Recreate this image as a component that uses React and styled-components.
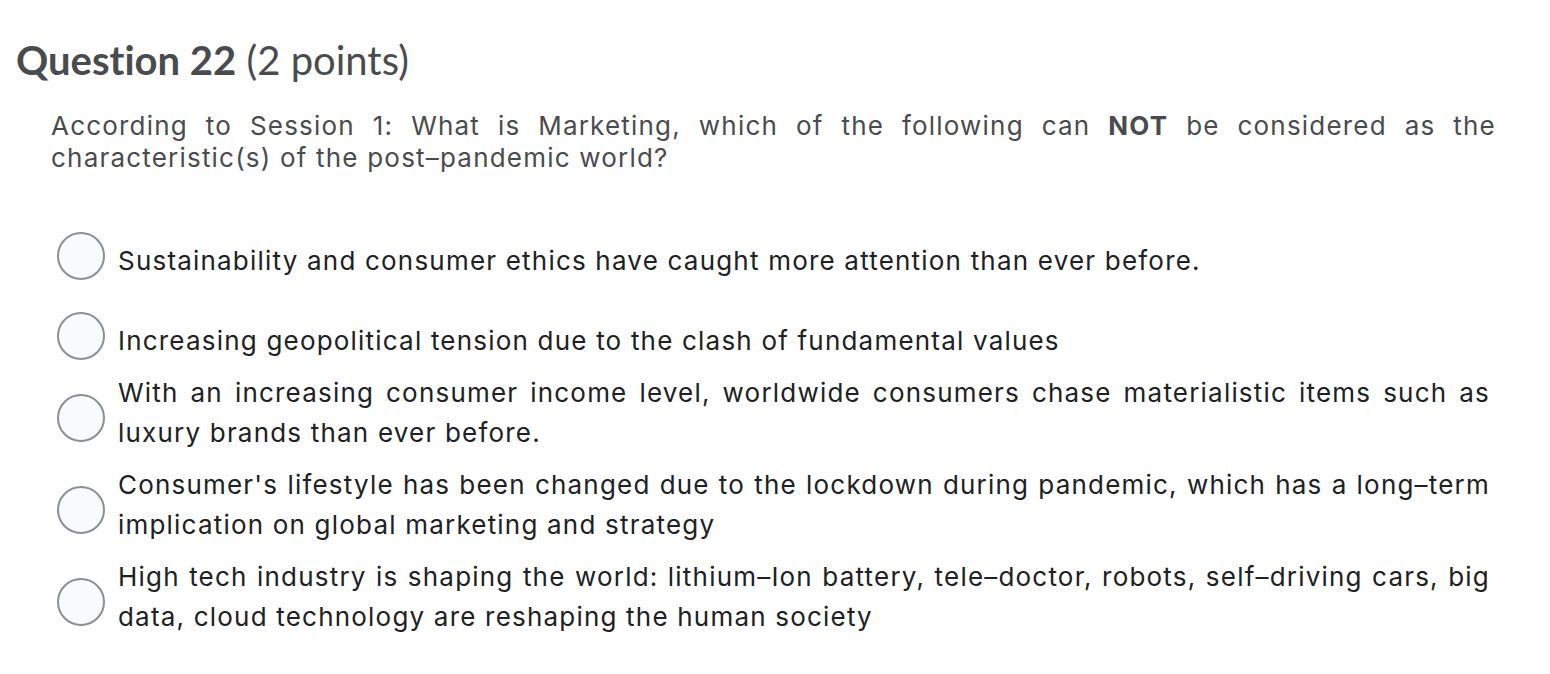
import React from "react";
import styled, { createGlobalStyle } from "styled-components";

const Global = createGlobalStyle`
  html, body { margin: 0; padding: 0; background: #ffffff; }
  body { font-family: Inter, "Liberation Sans", Arial, sans-serif; }
`;

const Page = styled.main`
  width: 1550px;
  padding: 36px 0 0 16px;
  box-sizing: border-box;
`;

const Title = styled.h1`
  margin: 0;
  font-family: Lato, "Liberation Sans", sans-serif;
  font-size: 40px;
  line-height: 48px;
  font-weight: 400;
  color: #494c4e;
  font-variant-ligatures: none;
`;

const TitleStrong = styled.strong`
  font-weight: 700;
`;

const Prompt = styled.p`
  margin: 26px 0 0 35px;
  width: 1445px;
  font-size: 26px;
  line-height: 32px;
  letter-spacing: 1.2px;
  color: #494c4e;
  text-align: justify;
`;

const Options = styled.div`
  margin: 61px 0 0 41px;
  width: 1433px;
  display: flex;
  flex-direction: column;
`;

const Option = styled.label`
  display: flex;
  align-items: flex-start;
  gap: 13px;
  padding: 6px 0;
  margin-bottom: ${(p) => (p.$extra ? "28px" : "0")};
  cursor: pointer;
`;

const Radio = styled.span`
  flex: 0 0 auto;
  width: 48px;
  height: 48px;
  box-sizing: border-box;
  border-radius: 50%;
  border: 2px solid #8c9094;
  background: #f9fafc;
  margin: ${(p) => (p.$multi ? "21px 0 0" : "-9px 0 -9px")};
`;

const OptionText = styled.span`
  flex: 1 1 auto;
  font-size: 26px;
  line-height: 40px;
  letter-spacing: 1.2px;
  color: #202122;
  text-align: justify;
`;

const options = [
  "Sustainability and consumer ethics have caught more attention than ever before.",
  "Increasing geopolitical tension due to the clash of fundamental values",
  "With an increasing consumer income level, worldwide consumers chase materialistic items such as luxury brands than ever before.",
  "Consumer's lifestyle has been changed due to the lockdown during pandemic, which has a long–term implication on global marketing and strategy",
  "High tech industry is shaping the world: lithium–Ion battery, tele–doctor, robots, self–driving cars, big data, cloud technology are reshaping the human society",
];

export default function App() {
  return (
    <>
      <Global />
      <Page>
        <Title>
          <TitleStrong>Question 22</TitleStrong> (2 points)
        </Title>
        <Prompt>
          According to Session 1: What is Marketing, which of the following can <strong>NOT</strong> be
          considered as the characteristic(s) of the post–pandemic world?
        </Prompt>
        <Options>
          {options.map((t, i) => (
            <Option key={i} $extra={i === 0}>
              <Radio $multi={i >= 2} />
              <OptionText>{t}</OptionText>
            </Option>
          ))}
        </Options>
      </Page>
    </>
  );
}
